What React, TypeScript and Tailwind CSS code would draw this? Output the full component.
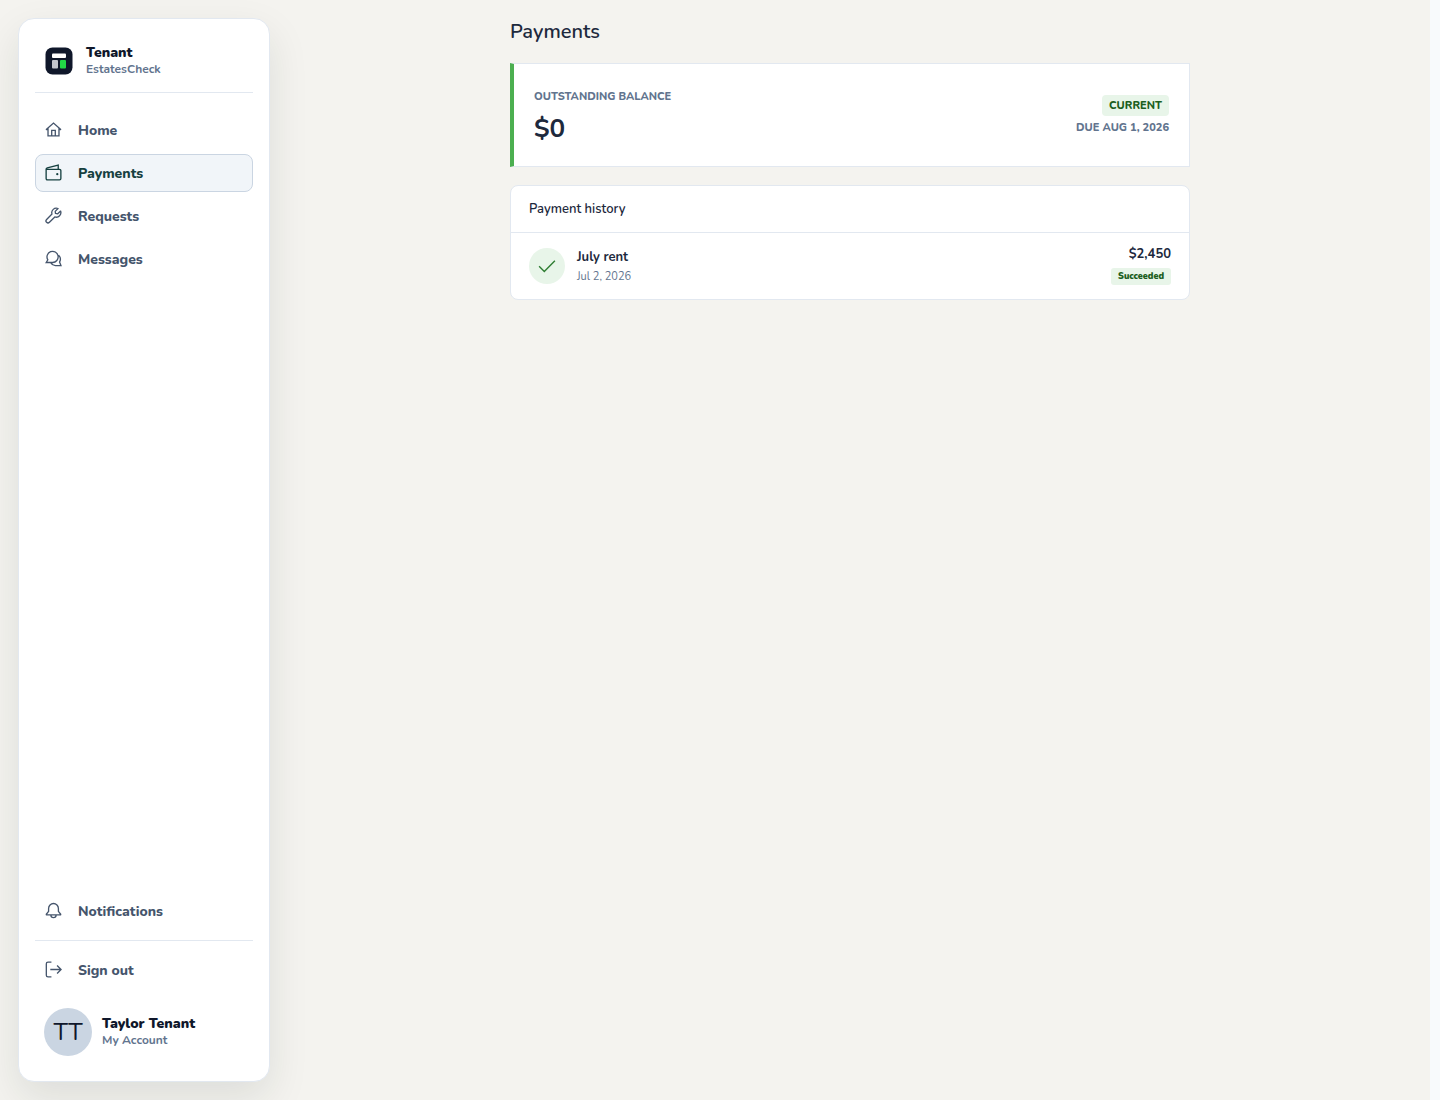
import React from 'react';

type IconProps = { className?: string };

const iconBase = {
  viewBox: '0 0 18 18',
  fill: 'none',
  stroke: 'currentColor',
  strokeWidth: 1.4,
  'aria-hidden': true,
} as const;

const HomeIcon: React.FC<IconProps> = ({ className }) => (
  <svg {...iconBase} className={className}>
    <path d="M1 9.3 L9 2.2 L17 9.3 M3.2 7.6 V15.8 H14.8 V7.6 M7.1 15.6 V10 H10.9 V15.6 M1.2 9 H3.4 M14.6 9 H16.8" />
  </svg>
);

const WalletIcon: React.FC<IconProps> = ({ className }) => (
  <svg {...iconBase} className={className}>
    <path d="M1.6 5.6 H15.4 Q16.8 5.6 16.8 6.8 V15.4 Q16.8 16.8 15.4 16.8 H2.6 Q1.2 16.8 1.2 15.4 V5.4 Q1.2 4.5 2.4 4.2 L14 1.2 V5.4" />
    <circle cx="13" cy="10.8" r="1.2" fill="currentColor" stroke="none" />
  </svg>
);

const WrenchIcon: React.FC<IconProps> = ({ className }) => (
  <svg {...iconBase} className={className}>
    <path d="M13.8 1.6 A4.8 4.8 0 0 0 7.4 7.5 L1.7 13.2 A2 2 0 0 0 4.7 16.2 L10.4 10.5 A4.8 4.8 0 0 0 16.5 4.3 L13.5 7.2 L11.1 6.8 L10.8 4.6 Z" strokeLinejoin="round" />
  </svg>
);

const ChatIcon: React.FC<IconProps> = ({ className }) => (
  <svg {...iconBase} className={className}>
    <path d="M1.3 13.2 H8 A5.9 5.9 0 1 0 3 10.4 Z M14.4 5.4 A6.2 6.2 0 0 1 15.4 12.8 L16.9 16.5 H11 A5.8 5.8 0 0 1 6.2 13.6" />
  </svg>
);

const BellIcon: React.FC<IconProps> = ({ className }) => (
  <svg {...iconBase} className={className}>
    <path d="M1.4 13.6 V13 L3.8 10 V6.8 A5.2 5.2 0 0 1 14.2 6.8 V10 L16.6 13 V13.6 Z M6.2 13.8 A2.8 2.8 0 0 0 11.8 13.8" strokeLinejoin="round" />
  </svg>
);

const SignOutIcon: React.FC<IconProps> = ({ className }) => (
  <svg {...iconBase} className={className}>
    <path d="M6.8 1.2 H3.2 Q1.4 1.2 1.4 3 V15 Q1.4 16.8 3.2 16.8 H6.8 M5.6 9 H17 M12.8 4.8 L17 9 L12.8 13.2" />
  </svg>
);

const CheckIcon: React.FC<IconProps> = ({ className }) => (
  <svg {...iconBase} className={className}>
    <path d="M1.1 9.3 L6.3 14.4 L16.9 3.8" />
  </svg>
);

const Logo: React.FC<IconProps> = ({ className }) => (
  <svg viewBox="0 0 28 28" className={className} aria-hidden="true">
    <rect x="0.5" y="0.5" width="27" height="27" rx="7" fill="#0f172a" />
    <rect x="7" y="6.5" width="14" height="4.5" rx="1" fill="#fff" />
    <rect x="7" y="13" width="6" height="8.5" rx="1" fill="#c3c6cd" />
    <rect x="15" y="13" width="6" height="8.5" rx="1" fill="#22d846" />
  </svg>
);

const navItems = [
  { label: 'Home', Icon: HomeIcon },
  { label: 'Payments', Icon: WalletIcon, active: true },
  { label: 'Requests', Icon: WrenchIcon },
  { label: 'Messages', Icon: ChatIcon },
];

const itemClass = 'flex h-[38px] w-full items-center gap-4 rounded-lg border px-[9px] pb-px text-left text-sm font-extrabold';

const Sidebar: React.FC = () => (
  <aside className="sticky top-0 h-screen w-[270px] shrink-0 py-[18px] pl-[18px]">
    <div className="flex h-full flex-col rounded-2xl border border-slate-200 bg-white px-4 pb-4 shadow-[0_16px_40px_rgba(15,35,25,0.1)]">
      <div className="flex h-[74px] shrink-0 items-center gap-[13px] border-b border-slate-200 pl-[10px] pt-[10px]">
        <Logo className="size-7" />
        <div>
          <div className="text-sm leading-4 font-black text-slate-900">Tenant</div>
          <div className="text-xs leading-4 font-bold text-slate-500">EstatesCheck</div>
        </div>
      </div>

      <nav className="mt-[18px] flex flex-col gap-[5px]">
        {navItems.map(({ label, Icon, active }) => (
          <a
            key={label}
            href="#"
            aria-current={active ? 'page' : undefined}
            className={`${itemClass} ${active ? 'border-slate-300 bg-slate-100 text-[#164040]' : 'border-transparent text-slate-600'}`}
          >
            <Icon className="size-[17px]" />
            <span className="pt-[3px]">{label}</span>
          </a>
        ))}
      </nav>

      <div className="mt-auto">
        <div className="border-b border-slate-200 pb-[10px]">
          <a href="#" className={`${itemClass} border-transparent text-slate-600`}>
            <BellIcon className="size-[17px]" />
            <span className="pt-[3px]">Notifications</span>
          </a>
        </div>
        <button type="button" className={`${itemClass} mt-[10px] border-transparent text-slate-600`}>
          <SignOutIcon className="size-[17px]" />
          <span className="pt-[3px]">Sign out</span>
        </button>
        <a href="#" className="mt-[10px] flex items-center gap-[10px] px-[9px] py-[9px]">
          <span className="flex size-12 items-center justify-center rounded-full bg-slate-300 text-2xl text-slate-900">TT</span>
          <span>
            <span className="block text-sm leading-4 font-black text-slate-900">Taylor Tenant</span>
            <span className="block text-xs leading-4 font-bold text-slate-500">My Account</span>
          </span>
        </a>
      </div>
    </div>
  </aside>
);

const payments = [{ title: 'July rent', date: 'Jul 2, 2026', amount: '$2,450', status: 'Succeeded' }];

const App: React.FC = () => {
  return (
    <div className="min-h-screen bg-slate-50 pr-[10px] font-['Nunito','Open_Sans',sans-serif] text-slate-800">
      <div className="flex min-h-screen bg-[#f4f3ef]">
        <Sidebar />
        <main className="min-w-0 flex-1">
          <div className="mx-auto max-w-[680px] pt-[19px]">
            <h1 className="text-xl leading-[26px] font-semibold">Payments</h1>

            <section className="mt-[18px] flex items-center justify-between border border-l-4 border-slate-200 border-l-[#4caf50] bg-white px-5 pt-[23px] pb-[21px]">
              <div>
                <div className="text-[11px] leading-5 font-extrabold text-slate-500">OUTSTANDING BALANCE</div>
                <div className="mt-[6px] text-[26px] leading-8 font-bold">$0</div>
              </div>
              <div className="flex flex-col items-end pb-px">
                <span className="rounded bg-[#e8f5e9] px-[7px] text-[11px] leading-[21px] font-extrabold text-[#1b5e20]">CURRENT</span>
                <span className="mt-1 text-[11px] leading-4 font-extrabold text-slate-500">DUE AUG 1, 2026</span>
              </div>
            </section>

            <section className="mt-[18px] rounded-lg border border-slate-200 bg-white">
              <h2 className="border-b border-slate-200 px-[18px] py-[14px] text-[13px] leading-[18px] font-semibold">Payment history</h2>
              <ul>
                {payments.map((payment) => (
                  <li key={payment.title} className="flex items-center gap-3 px-[18px] py-3">
                    <span className="flex size-9 items-center justify-center rounded-full bg-[#e8f5e9] text-[#2e7d32]">
                      <CheckIcon className="size-[18px]" />
                    </span>
                    <div className="flex-1 pt-0.5">
                      <div className="text-[13px] leading-5 font-bold">{payment.title}</div>
                      <div className="text-[11px] leading-5 text-slate-500">{payment.date}</div>
                    </div>
                    <div className="flex flex-col items-end pb-0.5">
                      <span className="text-[13px] leading-[18px] font-bold">{payment.amount}</span>
                      <span className="mt-[5px] rounded-[3px] bg-[#e8f5e9] px-[7px] text-[9px] leading-[17px] font-black text-[#1b5e20]">{payment.status}</span>
                    </div>
                  </li>
                ))}
              </ul>
            </section>
          </div>
        </main>
      </div>
    </div>
  );
};

export default App;
